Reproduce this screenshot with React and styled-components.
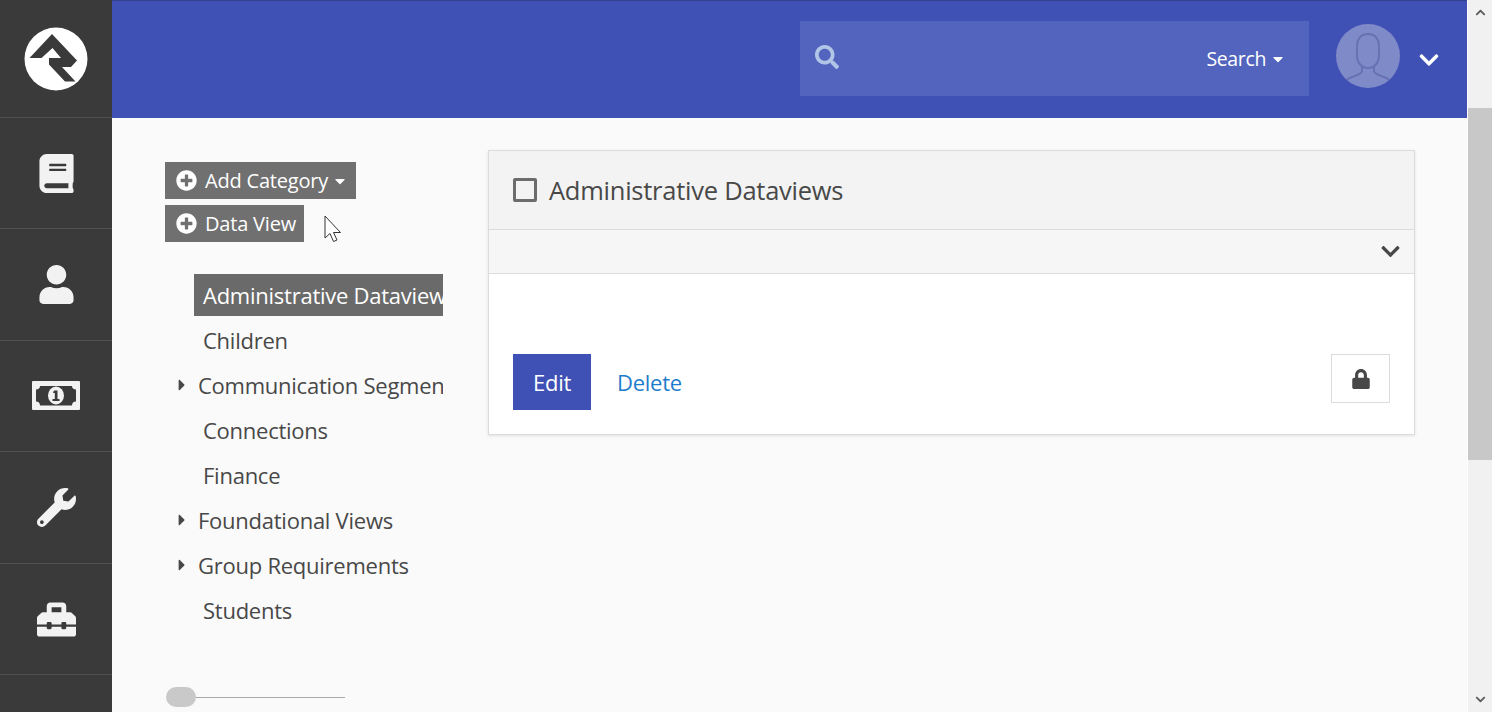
import React from "react";
import styled, { createGlobalStyle } from "styled-components";
import { FaBook, FaUser, FaWrench, FaToolbox, FaLock, FaSearch, FaChevronDown, FaChevronUp, FaPlusCircle, FaCaretDown, FaCaretRight } from "react-icons/fa";

const Global = createGlobalStyle`
  html, body { margin: 0; padding: 0; height: 712px; overflow: hidden; background: #fafafa; }
  body { font-family: "Open Sans", "Noto Sans", sans-serif; color: #484848; }
`;

const Shell = styled.div`display: flex; width: 1492px; height: 712px; overflow: hidden;`;

const Sidebar = styled.nav`
  width: 112px; flex: none; background: #3a3a3a; display: flex; flex-direction: column;
`;
const LogoCell = styled.div`
  height: 117px; flex: none; display: flex; align-items: center; justify-content: center;
  border-bottom: 1px solid #505050; box-sizing: content-box; padding-bottom: 0;
  svg { margin-top: 1px; margin-right: 1px; }
`;
const NavCell = styled.div`
  height: ${p => p.$h}px; flex: none; box-sizing: border-box; display: flex; align-items: center; justify-content: center;
  border-bottom: 1px solid #505050; color: #f2f2f2;
  svg { display: block; }
`;

const Content = styled.div`flex: 1; min-width: 0; display: flex; flex-direction: column;`;
const Header = styled.header`
  height: 118px; flex: none; box-sizing: border-box; background: #3f51b5; border-top: 1px solid #33428f;
  display: flex; align-items: flex-start; padding: 20px 27px 0 688px;
`;
const SearchBox = styled.div`
  width: 510px; height: 75px; background: #5264bd; display: flex; align-items: center;
  padding: 0 23px 0 15px; box-sizing: border-box; color: #fff;
`;
const SearchIcon = styled(FaSearch)`color: #b1c5e6; font-size: 24px; margin-top: -3px;`;
const SearchLabel = styled.span`margin-left: auto; font-size: 19.5px; display: flex; align-items: center; gap: 4px; letter-spacing: -0.35px;`;
const Avatar = styled.div`
  width: 64px; height: 64px; border-radius: 50%; background: #7f8ac8; margin: 3px 0 0 27px; overflow: hidden; flex: none;
`;
const HeaderChevron = styled(FaChevronDown)`color: #fff; font-size: 22px; margin: 28px 0 0 18px;`;

const Main = styled.main`
  flex: 1; min-height: 0; display: flex; align-items: flex-start; padding: 32px 52px 0 53px; gap: 45px; background: #fafafa;
`;
const Left = styled.aside`width: 278px; flex: none; position: relative;`;
const ActionBtn = styled.div`
  display: flex; width: fit-content; align-items: center; height: 37px; background: #707070; color: #fff;
  font-size: 20px; padding: 0 8px 0 11px; gap: 8px; margin: ${p => p.$mt}px 0 0 0; box-sizing: border-box; letter-spacing: -0.2px;
`;
const Cursor = styled.svg`position: absolute; left: 159px; top: 65px;`;
const Tree = styled.ul`list-style: none; margin: 32px 0 0; padding: 0 0 0 0; width: 278px; overflow: hidden;`;
const TreeItem = styled.li`
  height: 42px; margin-bottom: 3px; display: flex; align-items: center; font-size: 22px; letter-spacing: -0.25px; white-space: nowrap; overflow: hidden;
`;
const Caret = styled.span`width: 29px; flex: none; display: flex; padding-left: 8px; box-sizing: border-box; color: #484848; font-size: 18px;`;
const Label = styled.span`
  flex: 1; min-width: 0; height: 42px; line-height: 42px; overflow: hidden; padding-left: ${p => p.$indent ? 13 : 9}px;
  margin-left: ${p => p.$indent ? -9 : 0}px; box-sizing: border-box;
  background: ${p => p.$active ? "#6a6a6a" : "transparent"}; color: ${p => p.$active ? "#fff" : "#484848"};
`;
const Slider = styled.div`display: flex; align-items: center; width: 180px; margin-top: 53px; height: 20px;`;
const Thumb = styled.div`width: 30px; height: 20px; border-radius: 10px; background: #c9c9c9; flex: none; margin-left: 1px;`;
const Track = styled.div`flex: 1; height: 1px; background: #aaa;`;

const Card = styled.section`
  flex: 1; min-width: 0; background: #fff; border: 1px solid #dcdcdc; box-shadow: 0 1px 3px rgba(0,0,0,.1); height: 285px; box-sizing: border-box; display: flex; flex-direction: column;
`;
const CardHead = styled.div`
  height: 79px; flex: none; box-sizing: border-box; background: #f3f3f3; border-bottom: 1px solid #dcdcdc; display: flex; align-items: center; padding-left: 24px; gap: 12px;
  font-size: 25.5px; letter-spacing: -0.25px; color: #484848;
`;
const Check = styled.span`width: 24px; height: 24px; box-sizing: border-box; border: 3px solid #6c6c6c; border-radius: 2px; flex: none;`;
const CardBar = styled.div`
  height: 44px; flex: none; box-sizing: border-box; background: #f6f6f6; border-bottom: 1px solid #dcdcdc; display: flex; align-items: center; justify-content: flex-end; padding-right: 13px; color: #484848; font-size: 21px;
`;
const CardBody = styled.div`flex: 1; display: flex; align-items: flex-start; padding: 80px 24px 0; `;
const EditBtn = styled.div`width: 78px; height: 56px; background: #3f51b5; color: #fff; display: flex; align-items: center; justify-content: center; font-size: 22px; letter-spacing: -0.3px;`;
const DeleteLink = styled.div`height: 56px; line-height: 56px; margin-left: 26px; color: #1f7ccc; font-size: 22px; letter-spacing: -0.25px;`;
const LockBtn = styled.div`width: 59px; height: 49px; margin-left: auto; box-sizing: border-box; border: 1px solid #dcdcdc; display: flex; align-items: center; justify-content: center; color: #484848; font-size: 20px;`;

const Scrollbar = styled.div`width: 25px; flex: none; background: #f1f1f1; display: flex; flex-direction: column; align-items: center; color: #5f5a5a; border-left: 1px solid #fff; box-sizing: border-box;`;
const ArrowSlot = styled.div`height: 25px; flex: none; display: flex; align-items: center; justify-content: center; font-size: 11px; margin-top: ${p => p.$auto ? "auto" : 0};`;
const ScrollThumb = styled.div`width: 100%; height: 352px; background: #c8c8c8; margin-top: 83px; flex: none;`;

const Logo = () => (
  <svg width="64" height="64" viewBox="0 0 64 64">
    <circle cx="32" cy="32" r="31.5" fill="#fff" />
    <path d="M5.5 31 L28 7 L53 33.5 L47 40 L38 40 L51.500 54.500 L41 54.500 L25 37.500 L25 31 L37 31 L28.500 21 L17.500 31 Z" fill="#3a3a3a" />
  </svg>
);

const MoneyIcon = () => (
  <svg width="48" height="30" viewBox="0 0 48 30">
    <path fill="#f2f2f2" fillRule="evenodd" d="M1 0H47a1 1 0 0 1 1 1V28a1 1 0 0 1-1 1H1a1 1 0 0 1-1-1V1a1 1 0 0 1 1-1ZM8 5C8 7 6.500 8.500 4 8.500V20.500C6.500 20.500 8 22 8 24.500H40C40 22 41.500 20.500 44 20.500V8.500C41.500 8.500 40 7 40 5Z" />
    <ellipse cx="24" cy="14.500" rx="8" ry="9" fill="#f2f2f2" />
    <path fill="#3a3a3a" d="M22 9.500H25.500V18H27.500V20H20.500V18H22.800V12H21Z" />
  </svg>
);

const AvatarArt = () => (
  <svg width="64" height="64" viewBox="0 0 64 64" fill="none" stroke="#6672b4" strokeWidth="2">
    <path d="M32 10C25 10 21 15 21 22V32C21 38 25 44 32 44C39 44 43 38 43 32V22C43 15 39 10 32 10Z" />
    <path d="M26 43V47C26 50 21 51 16 53C12 54.500 10 56 9 58" />
    <path d="M38 43V47C38 50 43 51 48 53C52 54.500 54 56 55 58" />
  </svg>
);

const items = [
  { t: "Administrative Dataviews", active: true },
  { t: "Children" },
  { t: "Communication Segments", caret: true },
  { t: "Connections" },
  { t: "Finance" },
  { t: "Foundational Views", caret: true },
  { t: "Group Requirements", caret: true },
  { t: "Students" },
];

export default function App() {
  return (
    <>
      <Global />
      <Shell>
        <Sidebar>
          <LogoCell><Logo /></LogoCell>
          <NavCell $h={111}><FaBook size={39} /></NavCell>
          <NavCell $h={112}><FaUser size={39} /></NavCell>
          <NavCell $h={111}><MoneyIcon /></NavCell>
          <NavCell $h={112}><FaWrench size={39} /></NavCell>
          <NavCell $h={111}><FaToolbox size={39} /></NavCell>
        </Sidebar>
        <Content>
          <Header>
            <SearchBox>
              <SearchIcon />
              <SearchLabel>Search <FaCaretDown size={16} /></SearchLabel>
            </SearchBox>
            <Avatar><AvatarArt /></Avatar>
            <HeaderChevron />
          </Header>
          <Main>
            <Left>
              <ActionBtn $mt={12}><FaPlusCircle size={21} /> Add Category <FaCaretDown size={16} style={{ marginLeft: -4 }} /></ActionBtn>
              <ActionBtn $mt={6}><FaPlusCircle size={21} /> Data View</ActionBtn>
              <Cursor width="20" height="28" viewBox="0 0 20 28">
                <path d="M1 1V23L6 18.500L9.500 26.500L13 25L9.500 17.500H16.500Z" fill="#fff" stroke="#333" strokeWidth="1" />
              </Cursor>
              <Tree>
                {items.map(i => (
                  <TreeItem key={i.t}>
                    <Caret>{i.caret && <FaCaretRight />}</Caret>
                    <Label $active={i.active} $indent={i.caret}>{i.t}</Label>
                  </TreeItem>
                ))}
              </Tree>
              <Slider><Thumb /><Track /></Slider>
            </Left>
            <Card>
              <CardHead><Check /> Administrative Dataviews</CardHead>
              <CardBar><FaChevronDown /></CardBar>
              <CardBody>
                <EditBtn>Edit</EditBtn>
                <DeleteLink>Delete</DeleteLink>
                <LockBtn><FaLock /></LockBtn>
              </CardBody>
            </Card>
          </Main>
        </Content>
        <Scrollbar>
          <ArrowSlot><FaChevronUp /></ArrowSlot>
          <ScrollThumb />
          <ArrowSlot $auto><FaChevronDown /></ArrowSlot>
        </Scrollbar>
      </Shell>
    </>
  );
}
